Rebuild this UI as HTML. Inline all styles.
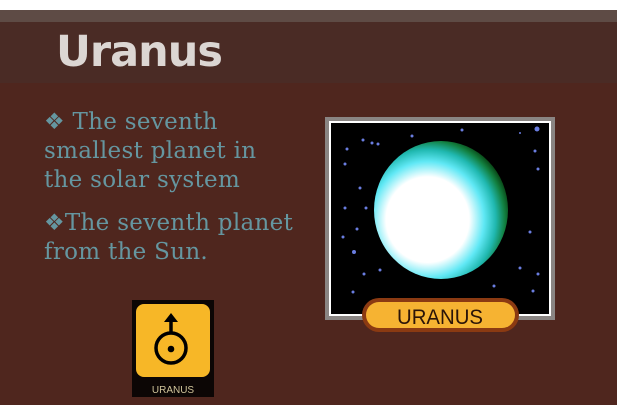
<!DOCTYPE html>
<html><head><style>
body{margin:0;width:625px;height:405px;background:#fff;position:relative;overflow:hidden}
.main{position:absolute;left:0;top:10px;width:617px;height:395px;background:#4f261e}
.band{position:absolute;left:0;top:0;width:617px;height:12px;background:#5e4b45}
.hdr{position:absolute;left:0;top:12px;width:617px;height:61px;background:#4a2b25}
h1{position:absolute;left:56px;top:5px;margin:0;font:bold 43px "DejaVu Sans","Liberation Sans",sans-serif;color:#dcd6d3;letter-spacing:-1px}
.txt{position:absolute;left:44px;font:23px "DejaVu Serif","Liberation Serif",serif;color:#6596a0;line-height:29px;white-space:nowrap;letter-spacing:0.3px}
</style></head><body>
<div class="main">
<div class="band"></div>
<div class="hdr"><h1>Uranus</h1></div>
<div class="txt" style="top:98px">❖ The seventh<br>smallest planet in<br>the solar system</div>
<div class="txt" style="top:199px">❖The seventh planet<br>from the Sun.</div>
<svg style="position:absolute;left:0;top:-10px" width="617" height="405">
<defs>
<radialGradient id="p" cx="0.4" cy="0.57" r="0.62">
<stop offset="0" stop-color="#fff"/><stop offset="0.5" stop-color="#fff"/>
<stop offset="0.68" stop-color="#60e8f5"/><stop offset="0.82" stop-color="#20b8b0"/><stop offset="0.93" stop-color="#128040"/><stop offset="1" stop-color="#0a4a18"/>
</radialGradient>
</defs>
<rect x="325" y="117" width="230" height="203" fill="#8a8583"/>
<rect x="329" y="121" width="222" height="195" fill="#fff"/>
<rect x="331" y="123" width="218" height="191" fill="#000"/>
<g fill="#6a7de0">
<circle cx="537" cy="129" r="2.5"/><circle cx="412" cy="136" r="1.5"/><circle cx="378" cy="144" r="1.5"/><circle cx="347" cy="149" r="1.5"/><circle cx="372" cy="143" r="1.5"/><circle cx="363" cy="140" r="1.5"/><circle cx="535" cy="151" r="1.5"/><circle cx="345" cy="164" r="1.5"/><circle cx="538" cy="169" r="1.5"/><circle cx="360" cy="188" r="1.5"/><circle cx="345" cy="208" r="1.5"/><circle cx="366" cy="208" r="1.5"/><circle cx="357" cy="229" r="1.5"/><circle cx="343" cy="237" r="1.5"/><circle cx="354" cy="252" r="2"/><circle cx="530" cy="232" r="1.5"/><circle cx="520" cy="268" r="1.5"/><circle cx="538" cy="274" r="1.5"/><circle cx="364" cy="274" r="1.5"/><circle cx="380" cy="270" r="1.5"/><circle cx="494" cy="286" r="1.5"/><circle cx="353" cy="292" r="1.5"/><circle cx="533" cy="291" r="1.5"/><circle cx="462" cy="130" r="1.5"/><circle cx="520" cy="133" r="1"/>
</g>
<ellipse cx="441" cy="210" rx="67" ry="69" fill="url(#p)"/>
<rect x="362" y="298" width="157" height="34" rx="17" fill="#8b3a12"/>
<rect x="366" y="302" width="149" height="26" rx="13" fill="#f6b332"/>
<text x="440" y="324" text-anchor="middle" font-family="Liberation Sans,sans-serif" font-size="21" fill="#2a1408" textLength="86" lengthAdjust="spacingAndGlyphs">URANUS</text>
<rect x="132" y="300" width="82" height="97" fill="#0c0605"/>
<rect x="136" y="304" width="74" height="73" rx="8" fill="#f7b727"/>
<text x="173" y="393" text-anchor="middle" font-family="Liberation Sans,sans-serif" font-size="10" fill="#cfc39a">URANUS</text>
<circle cx="171" cy="348" r="15" fill="none" stroke="#000" stroke-width="3.5"/>
<circle cx="171" cy="349" r="3.3" fill="#000"/>
<line x1="171" y1="333" x2="171" y2="320" stroke="#000" stroke-width="3.5"/>
<path d="M164 322 L171 313 L178 322 Z" fill="#000"/>
</svg>
</div>
</body></html>
